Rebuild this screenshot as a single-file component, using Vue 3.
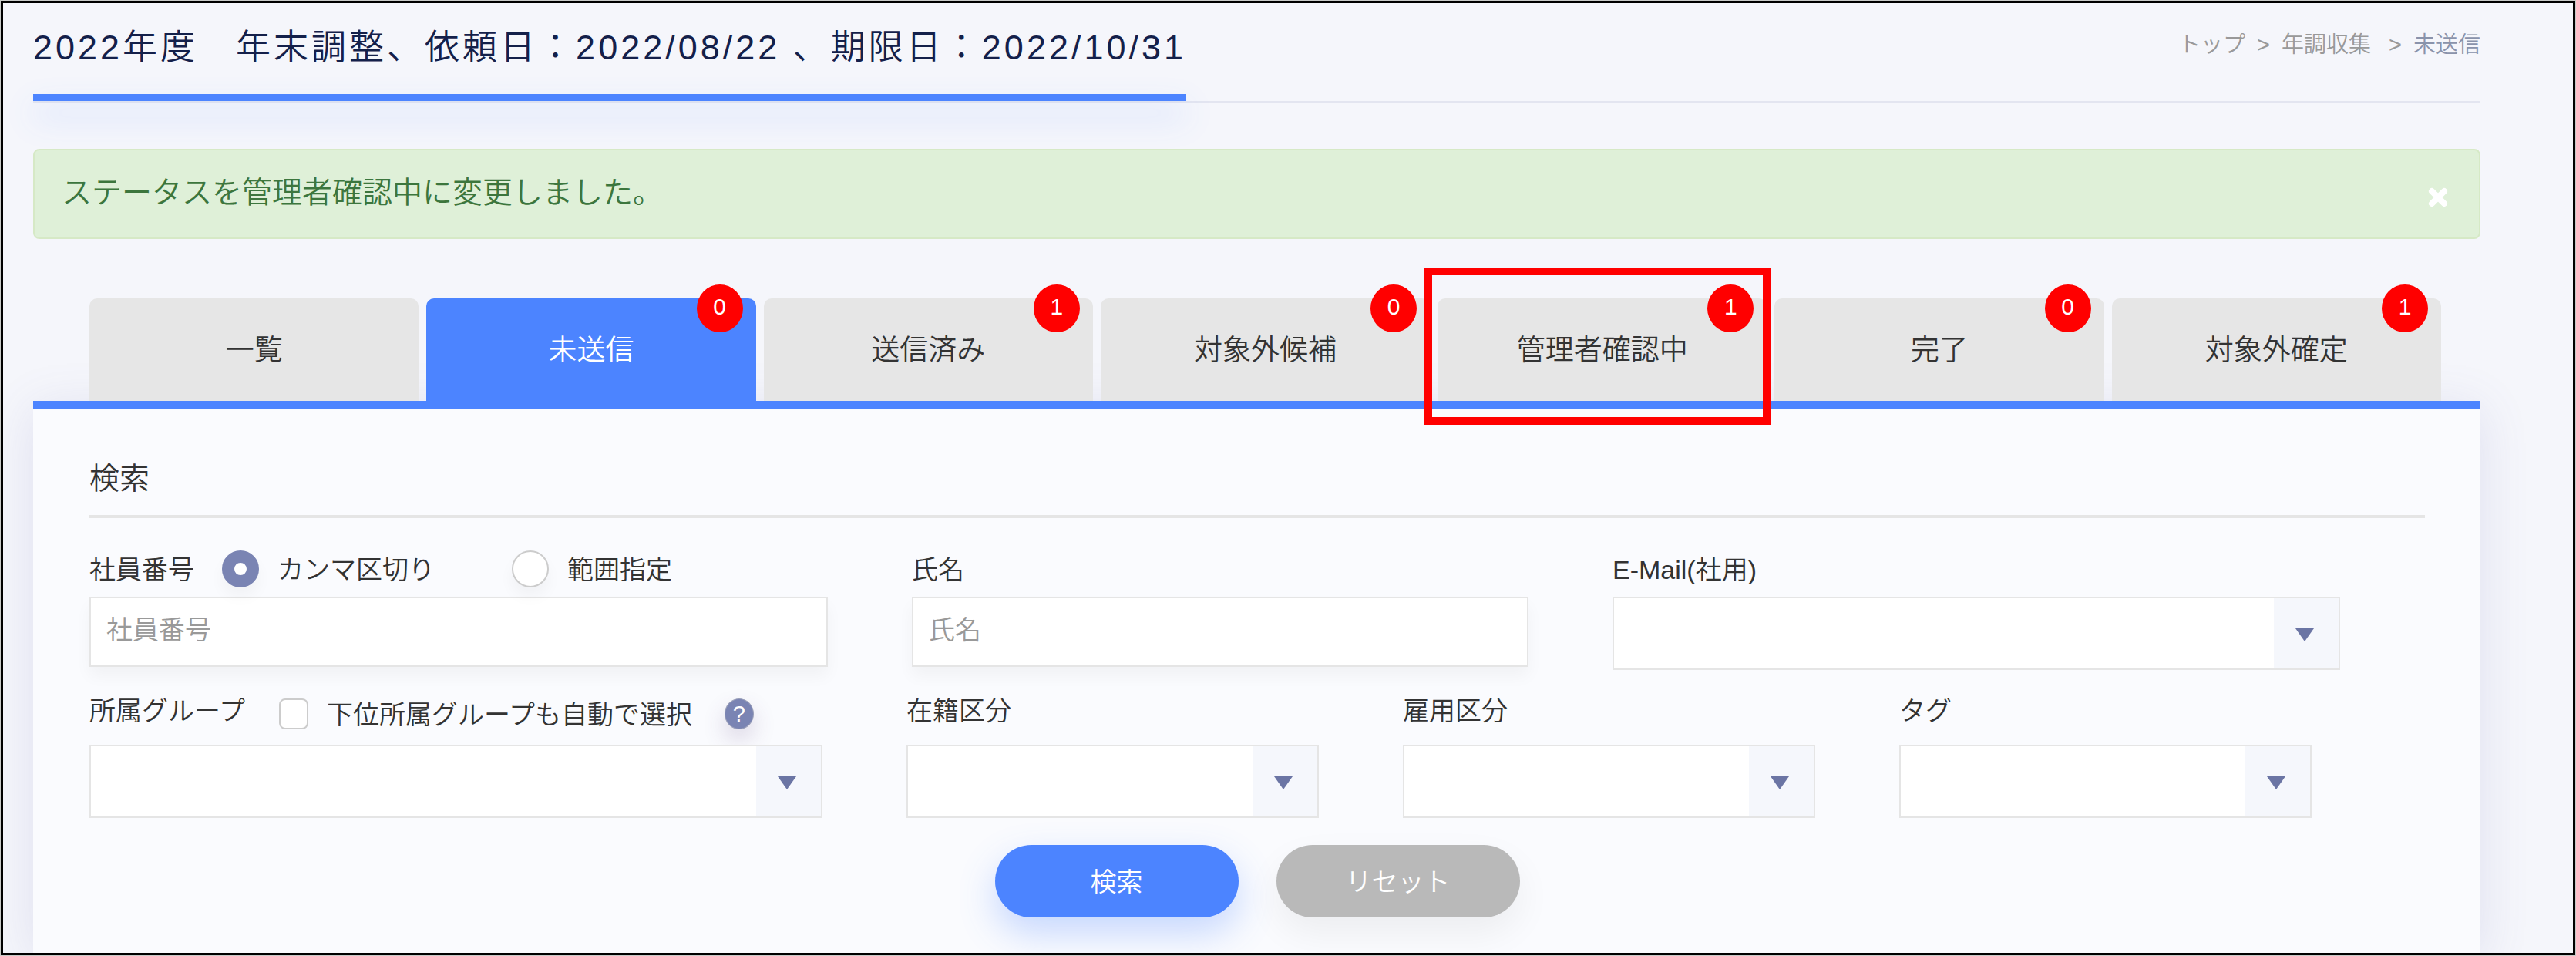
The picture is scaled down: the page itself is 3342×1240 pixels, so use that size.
<script setup>
import { ref } from 'vue'

const tabs = [
  { id: 'all', label: '一覧' },
  { id: 'unsent', label: '未送信', count: 0 },
  { id: 'sent', label: '送信済み', count: 1 },
  { id: 'candidate', label: '対象外候補', count: 0 },
  { id: 'checking', label: '管理者確認中', count: 1, marked: true },
  { id: 'done', label: '完了', count: 0 },
  { id: 'excluded', label: '対象外確定', count: 1 },
]

const selects = [
  { id: 'enrollment', label: '在籍区分' },
  { id: 'employment', label: '雇用区分' },
  { id: 'tag', label: 'タグ' },
]

const activeTab = ref('unsent')
const showAlert = ref(true)
const numberMode = ref('comma')
const employeeNumber = ref('')
const employeeName = ref('')
const includeChildren = ref(false)

function reset() {
  numberMode.value = 'comma'
  employeeNumber.value = ''
  employeeName.value = ''
  includeChildren.value = false
}
</script>

<template>
  <div class="page" lang="ja">
    <header class="page-header">
      <div class="title">
        <h1>2022年度　年末調整、依頼日：2022/08/22 、期限日：2022/10/31</h1>
        <div class="title-bar"></div>
      </div>
      <nav class="breadcrumb">
        <a href="#">トップ</a>
        <span>&gt;</span>
        <a href="#">年調収集</a>
        <span class="last-separator">&gt;</span>
        <span class="current">未送信</span>
      </nav>
    </header>

    <div v-if="showAlert" class="alert" role="status">
      <span>ステータスを管理者確認中に変更しました。</span>
      <button type="button" class="alert-close" aria-label="閉じる" @click="showAlert = false">
        <svg width="26" height="26" viewBox="0 0 26 26">
          <path d="M5 5L21 21M21 5L5 21" stroke="#fff" stroke-width="8" stroke-linecap="round" />
        </svg>
      </button>
    </div>

    <nav class="tabs">
      <button
        v-for="tab in tabs"
        :key="tab.id"
        type="button"
        class="tab"
        :class="{ active: tab.id === activeTab }"
        @click="activeTab = tab.id"
      >
        {{ tab.label }}
        <span v-if="tab.count !== undefined" class="badge">{{ tab.count }}</span>
        <span v-if="tab.marked" class="marker"></span>
      </button>
    </nav>

    <main class="card">
      <h2>検索</h2>
      <form @submit.prevent>
        <div class="row row-first">
          <div class="field">
            <div class="field-head">
              <label class="head-label" for="employee-number">社員番号</label>
              <label class="choice">
                <input v-model="numberMode" type="radio" name="number-mode" value="comma">
                <span>カンマ区切り</span>
              </label>
              <label class="choice">
                <input v-model="numberMode" type="radio" name="number-mode" value="range">
                <span>範囲指定</span>
              </label>
            </div>
            <input id="employee-number" v-model="employeeNumber" class="text-box" type="text" placeholder="社員番号">
          </div>
          <div class="field">
            <div class="field-head">
              <label for="employee-name">氏名</label>
            </div>
            <input id="employee-name" v-model="employeeName" class="text-box" type="text" placeholder="氏名">
          </div>
          <div class="field">
            <div class="field-head">
              <label for="email">E-Mail(社用)</label>
            </div>
            <div class="select-box">
              <select id="email"></select>
              <span class="caret">
                <svg width="24" height="17" viewBox="0 0 24 17"><path d="M0 0H24L12 17Z" fill="#6b75a4" /></svg>
              </span>
            </div>
          </div>
        </div>

        <div class="row row-second">
          <div class="field">
            <div class="field-head">
              <label class="head-label raised" for="group">所属グループ</label>
              <label class="choice">
                <input v-model="includeChildren" type="checkbox">
                <span>下位所属グループも自動で選択</span>
              </label>
              <button type="button" class="help" aria-label="ヘルプ">?</button>
            </div>
            <div class="select-box">
              <select id="group"></select>
              <span class="caret">
                <svg width="24" height="17" viewBox="0 0 24 17"><path d="M0 0H24L12 17Z" fill="#6b75a4" /></svg>
              </span>
            </div>
          </div>
          <div v-for="item in selects" :key="item.id" class="field">
            <div class="field-head">
              <label class="raised" :for="item.id">{{ item.label }}</label>
            </div>
            <div class="select-box">
              <select :id="item.id"></select>
              <span class="caret">
                <svg width="24" height="17" viewBox="0 0 24 17"><path d="M0 0H24L12 17Z" fill="#6b75a4" /></svg>
              </span>
            </div>
          </div>
        </div>

        <div class="actions">
          <button type="submit" class="action search">検索</button>
          <button type="button" class="action reset" @click="reset">リセット</button>
        </div>
      </form>
    </main>
  </div>
</template>

<style>
body {
  background: #c8cac8;
}

#app {
  padding: 1px;
}
</style>

<style scoped>
* {
  box-sizing: border-box;
}

.page {
  display: flex;
  flex-direction: column;
  min-height: calc(100vh - 2px);
  padding: 0 120px 0 39px;
  border: 3px solid #000;
  background: #f5f6fb;
  color: #333;
  font-family: "Liberation Sans", "Noto Sans CJK JP", sans-serif;
  font-size: 34px;
  font-weight: 350;
  overflow: hidden;
}

button,
input,
select {
  margin: 0;
  font: inherit;
}

button {
  padding: 0;
  border: none;
  cursor: pointer;
}

/* header */

.page-header {
  display: flex;
  justify-content: space-between;
  border-bottom: 2px solid #e3e5f0;
}

h1 {
  margin: 0;
  padding: 28px 0 30px;
  color: #14204a;
  font-size: 45px;
  font-weight: 350;
  line-height: 60px;
  letter-spacing: 4px;
  white-space: nowrap;
}

.title-bar {
  height: 9px;
  background: #4c84ff;
  box-shadow: 0 20px 40px rgba(76, 132, 255, 0.3);
}

.breadcrumb {
  display: flex;
  gap: 15px;
  padding-top: 34px;
  color: #999;
  font-size: 29px;
  line-height: 40px;
}

.breadcrumb a {
  color: inherit;
  text-decoration: none;
}

.last-separator {
  margin-left: 8px;
}

.current {
  color: #8a93ab;
}

/* alert */

.alert {
  display: flex;
  justify-content: space-between;
  align-items: center;
  margin-top: 60px;
  padding: 31px 40px 34px 35px;
  border: 2px solid #d6e9c6;
  border-radius: 8px;
  background: #dff0d8;
  color: #3c763d;
  font-size: 39px;
  line-height: 48px;
  position: relative;
}

.alert-close {
  display: flex;
  padding-top: 12px;
  background: none;
}

/* tabs */

.tabs {
  display: grid;
  grid-template-columns: repeat(7, 1fr);
  gap: 10px;
  margin-top: 77px;
  padding: 0 51px 0 73px;
  position: relative;
  z-index: 1;
}

.tab {
  position: relative;
  height: 133px;
  padding-bottom: 6px;
  border-radius: 10px 10px 0 0;
  background: #e6e6e6;
  color: #333;
  font-size: 37px;
}

.tab.active {
  background: #4c84ff;
  color: #fff;
}

.badge {
  position: absolute;
  top: -18px;
  right: 17px;
  width: 60px;
  height: 62px;
  border-radius: 50%;
  background: #f00;
  color: #fff;
  font-size: 30px;
  line-height: 58px;
}

.marker {
  position: absolute;
  inset: -40px -5px -31px -17px;
  border: 10px solid #f00;
  pointer-events: none;
}

/* search card */

.card {
  flex: 1;
  padding: 62px 72px 46px 73px;
  border-top: 11px solid #4c84ff;
  background: #fafbfe;
  box-shadow: 0 10px 60px rgba(90, 90, 170, 0.14);
}

h2 {
  margin: 0;
  padding-bottom: 19px;
  border-bottom: 4px solid #e5e5e5;
  font-size: 39px;
  font-weight: 350;
  line-height: 56px;
}

.row {
  display: grid;
  column-gap: 109px;
}

.row-first {
  grid-template-columns: 958fr 800fr 944fr;
  margin-top: 30px;
  padding-right: 110px;
}

.row-second {
  grid-template-columns: 951fr 535fr 535fr 535fr;
  margin-top: 17px;
  padding-right: 147px;
}

.field {
  min-width: 0;
}

.field-head {
  display: flex;
  align-items: center;
  height: 72px;
  white-space: nowrap;
}

.row-second .field-head {
  height: 80px;
}

.field-head > label:not(.choice),
.choice span {
  padding-bottom: 4px;
}

.field-head > label.raised {
  padding-bottom: 14px;
}

.head-label {
  margin-right: 36px;
}

.row-second .head-label {
  margin-right: 44px;
}

.choice {
  display: flex;
  align-items: center;
  gap: 24px;
}

.choice + .choice {
  margin-left: 100px;
}

.choice input {
  appearance: none;
  border: 2px solid #ccc;
  background: #fff;
}

.choice input[type="radio"] {
  width: 48px;
  height: 48px;
  border-radius: 50%;
  box-shadow: 0 12px 20px rgba(0, 0, 0, 0.04);
}

.choice input[type="radio"]:checked {
  border: 16px solid #7a84b3;
}

.choice input[type="checkbox"] {
  width: 38px;
  height: 40px;
  border-radius: 8px;
}

.choice input[type="checkbox"]:checked {
  background: #7a84b3;
}

.help {
  width: 38px;
  height: 40px;
  margin-left: 42px;
  border: 1px solid #9a9fb8;
  border-radius: 50%;
  background: #7a84b3;
  box-shadow: 0 14px 30px rgba(90, 60, 120, 0.2);
  color: #fff;
  font-size: 29px;
  font-weight: 400;
  line-height: 38px;
}

.text-box {
  display: block;
  width: 100%;
  height: 91px;
  padding: 0 20px 4px;
  border: 2px solid #e5e5e5;
  background: #fff;
  box-shadow: 0 12px 20px rgba(0, 0, 0, 0.04);
  color: #333;
}

.text-box::placeholder {
  color: #999;
}

.select-box {
  position: relative;
  height: 95px;
}

.select-box select {
  appearance: none;
  display: block;
  width: 100%;
  height: 100%;
  padding: 0 100px 0 20px;
  border: 2px solid #e5e5e5;
  border-radius: 0;
  background: #fff;
}

.caret {
  display: flex;
  align-items: center;
  justify-content: center;
  position: absolute;
  inset: 2px 2px 2px auto;
  width: 84px;
  padding: 4px 4px 0 0;
  background: #f5f7fc;
  pointer-events: none;
}

/* buttons */

.actions {
  display: flex;
  justify-content: center;
  gap: 49px;
  margin-top: 35px;
}

.action {
  width: 316px;
  height: 94px;
  padding-bottom: 4px;
  border-radius: 47px;
  color: #fff;
}

.search {
  background: #4c84ff;
  box-shadow: 0 20px 48px rgba(76, 132, 255, 0.3);
}

.reset {
  background: #b9b9b9;
  box-shadow: 0 20px 48px rgba(0, 0, 0, 0.06);
}
</style>
